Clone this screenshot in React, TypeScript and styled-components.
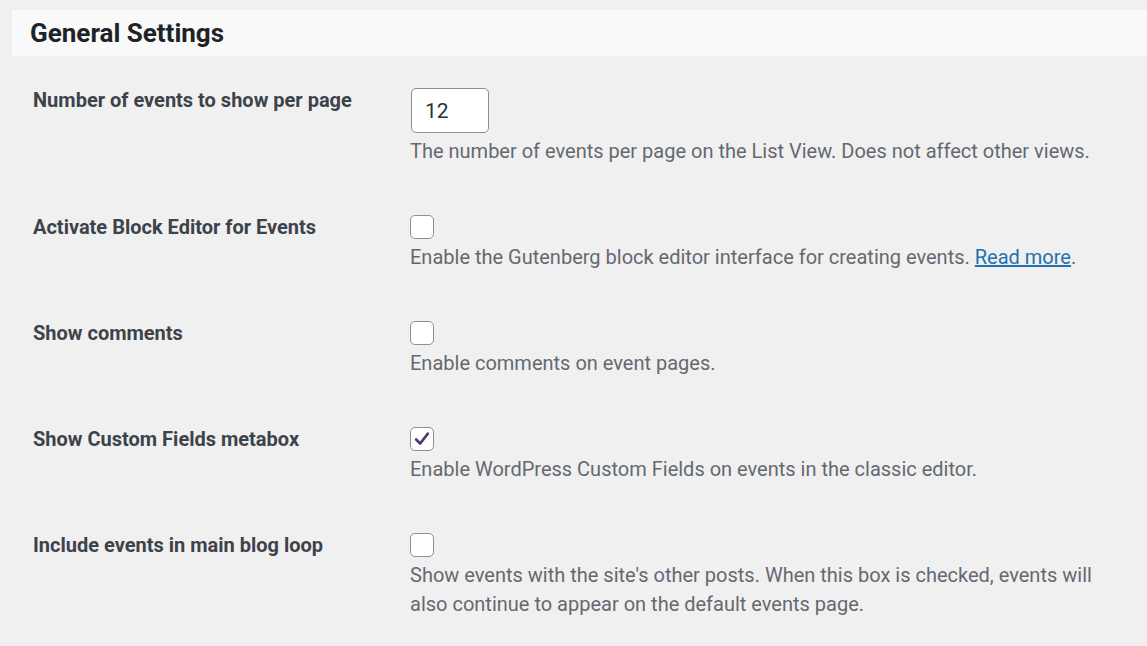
import styled, { createGlobalStyle } from "styled-components";

const Global = createGlobalStyle`
  body {
    margin: 0;
    background: #f0f0f1;
    font-family: Roboto, "Liberation Sans", sans-serif;
  }
`;

const Page = styled.div`
  padding: 10px 0 0 12px;
`;

const Header = styled.div`
  background: #f9f9f9;
  height: 46px;
  display: flex;
  align-items: center;
  padding-left: 18px;
`;

const Title = styled.h2`
  margin: 0;
  font-size: 26px;
  font-weight: 700;
  color: #1d2327;
`;

const Rows = styled.div`
  padding: 32px 0 0 21px;
  display: flex;
  flex-direction: column;
  gap: 49px;
`;

const Row = styled.div`
  display: grid;
  grid-template-columns: 377px 1fr;
`;

const Label = styled.div`
  font-size: 20px;
  font-weight: 700;
  line-height: 24px;
  color: #3c434a;
`;

const Field = styled.div`
  display: flex;
  flex-direction: column;
  align-items: flex-start;
  gap: 4px;
`;

const NumberInput = styled.input`
  box-sizing: border-box;
  width: 78px;
  height: 45px;
  border: 1.5px solid #8c8f94;
  border-radius: 5px;
  background: #fff;
  font: 21px Roboto, sans-serif;
  color: #2c3338;
  padding: 0 13px;
  margin-left: 1px;
`;

const Box = styled.span<{ $checked?: boolean }>`
  box-sizing: border-box;
  width: 24px;
  height: 24px;
  border: 1.5px solid #8c8f94;
  border-radius: 5px;
  background: #fff;
  display: flex;
  align-items: center;
  justify-content: center;
`;

const Desc = styled.p`
  margin: 0;
  font-size: 20px;
  line-height: 29px;
  color: #646970;
  max-width: 700px;
`;

const Link = styled.a`
  color: #2271b1;
  text-decoration: underline;
`;

const Check = ({ checked }: { checked?: boolean }) => (
  <Box $checked={checked}>
    {checked && (
      <svg width="18" height="18" viewBox="0 0 20 20">
        <path d="M3.5 10.5 L8 15 L16.5 4" fill="none" stroke="#4f3a6e" strokeWidth="3" strokeLinecap="round" strokeLinejoin="round" />
      </svg>
    )}
  </Box>
);

export default function App() {
  return (
    <Page>
      <Global />
      <Header>
        <Title>General Settings</Title>
      </Header>
      <Rows>
        <Row>
          <Label>Number of events to show per page</Label>
          <Field>
            <NumberInput type="text" defaultValue="12" />
            <Desc>The number of events per page on the List View. Does not affect other views.</Desc>
          </Field>
        </Row>
        <Row>
          <Label>Activate Block Editor for Events</Label>
          <Field>
            <Check />
            <Desc>
              Enable the Gutenberg block editor interface for creating events. <Link href="#">Read more</Link>.
            </Desc>
          </Field>
        </Row>
        <Row>
          <Label>Show comments</Label>
          <Field>
            <Check />
            <Desc>Enable comments on event pages.</Desc>
          </Field>
        </Row>
        <Row>
          <Label>Show Custom Fields metabox</Label>
          <Field>
            <Check checked />
            <Desc>Enable WordPress Custom Fields on events in the classic editor.</Desc>
          </Field>
        </Row>
        <Row>
          <Label>Include events in main blog loop</Label>
          <Field>
            <Check />
            <Desc>
              Show events with the site's other posts. When this box is checked, events will also continue to appear on the default events page.
            </Desc>
          </Field>
        </Row>
      </Rows>
    </Page>
  );
}
